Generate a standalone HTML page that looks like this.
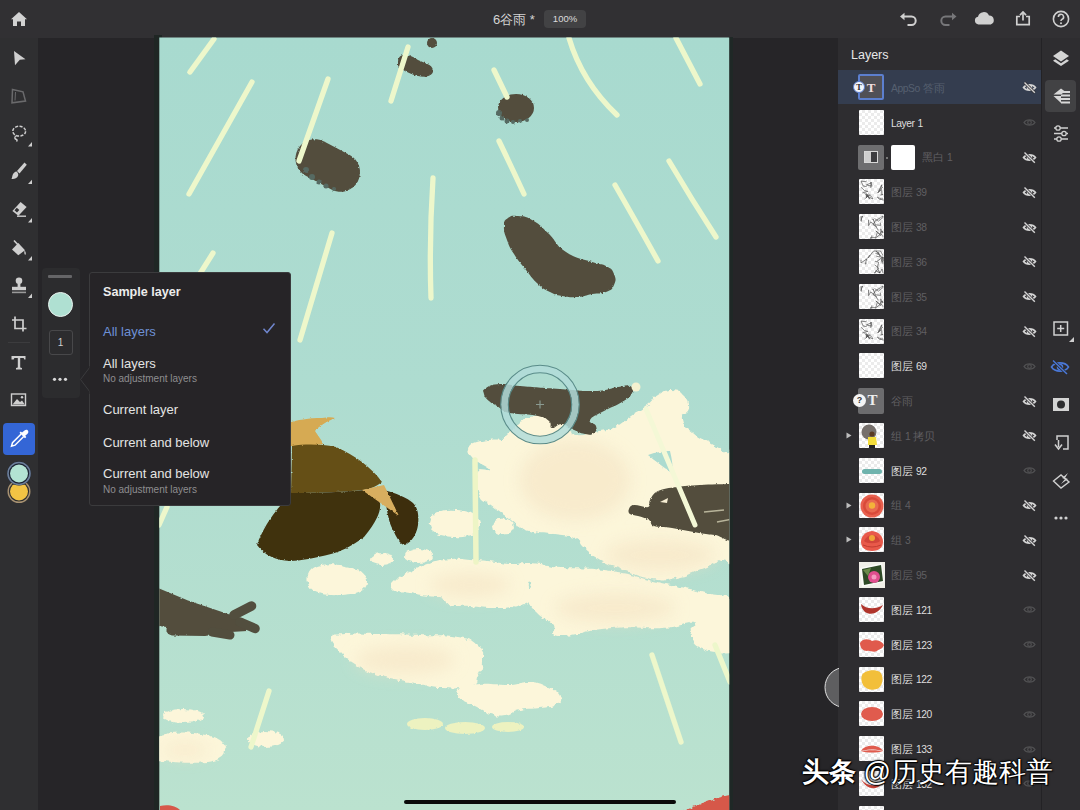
<!DOCTYPE html>
<html><head><meta charset="utf-8">
<style>
*{box-sizing:border-box}
html,body{margin:0;padding:0}
body{width:1080px;height:810px;overflow:hidden;position:relative;background:#262528;font-family:"Liberation Sans",sans-serif;color:#e6e6e6}
.abs{position:absolute}
#top{left:0;top:0;width:1080px;height:38px;background:#313033}
#ltool{left:0;top:38px;width:38px;height:772px;background:#2f2f31}
#canvas{left:159px;top:37px;width:571px;height:773px}
#cshadow{left:728px;top:37px;width:5px;height:773px;background:#1f2826}
#cshadowl{left:154px;top:35px;width:8px;height:775px;background:#1f2624}
#panel{left:838px;top:38px;width:203px;height:772px;background:#2e2d30}
#rstrip{left:1042px;top:38px;width:38px;height:772px;background:#2e2d30}
#rsep{left:1041px;top:38px;width:1px;height:772px;background:#232225}
</style></head>
<body>
<!-- TOP BAR -->
<div id="top" class="abs">
  <svg class="abs" style="left:10px;top:11px" width="18" height="16" viewBox="0 0 18 16">
    <path d="M9 1 L17 8.2 L15 8.2 L15 15 L11 15 L11 10.5 L7 10.5 L7 15 L3 15 L3 8.2 L1 8.2 Z" fill="#d2d2d2"/>
  </svg>
  <div class="abs" style="left:493px;top:11px;font-size:13px;color:#d4d4d4;letter-spacing:0px;white-space:nowrap">6谷雨 *</div>
  <div class="abs" style="left:544px;top:10px;width:42px;height:18px;background:#424244;border-radius:4px;font-size:9.5px;color:#dcdcdc;text-align:center;line-height:18px">100%</div>
  <svg class="abs" style="left:898px;top:11px" width="22" height="16" viewBox="0 0 22 16">
    <path d="M5 5.5 H13.5 A4.2 4.2 0 0 1 13.5 13.9 H9.5" fill="none" stroke="#d0d0d0" stroke-width="2"/>
    <path d="M2 5.5 L6.5 1.8 L6.5 9.2 Z" fill="#d0d0d0"/>
  </svg>
  <svg class="abs" style="left:937px;top:11px" width="22" height="16" viewBox="0 0 22 16">
    <path d="M16.5 5.5 H8.5 A4.2 4.2 0 0 0 8.5 13.9 H12.5" fill="none" stroke="#77777a" stroke-width="2"/>
    <path d="M19.5 5.5 L15 1.8 L15 9.2 Z" fill="#77777a"/>
  </svg>
  <svg class="abs" style="left:973px;top:11px" width="24" height="15" viewBox="0 0 24 15">
    <path d="M5.5 13.5 A3.9 3.9 0 0 1 5 5.8 A5.8 5.8 0 0 1 16 4.6 A4.6 4.6 0 0 1 17.8 13.5 Z" fill="#d0d0d0"/>
  </svg>
  <svg class="abs" style="left:1015px;top:11px" width="16" height="15" viewBox="0 0 16 15">
    <path d="M5 5.5 H1.8 V13.6 H14.2 V5.5 H11" fill="none" stroke="#d0d0d0" stroke-width="1.7"/>
    <path d="M8 9.5 V1.5" stroke="#d0d0d0" stroke-width="1.7"/>
    <path d="M5 4.2 L8 1 L11 4.2" fill="none" stroke="#d0d0d0" stroke-width="1.7"/>
  </svg>
  <svg class="abs" style="left:1052px;top:10px" width="18" height="18" viewBox="0 0 18 18">
    <circle cx="9" cy="9" r="7.6" fill="none" stroke="#d0d0d0" stroke-width="1.6"/>
    <path d="M6.4 7 A2.6 2.6 0 1 1 9.8 9.4 C9.1 9.8 9 10.3 9 11" fill="none" stroke="#d0d0d0" stroke-width="1.6"/>
    <circle cx="9" cy="13.2" r="1" fill="#d0d0d0"/>
  </svg>
</div>

<!-- LEFT TOOLBAR -->
<div id="ltool" class="abs">
  <svg class="abs" style="left:0;top:0" width="38" height="480" viewBox="0 38 38 480">
    <g fill="#cfcfcf">
      <!-- move -->
      <path d="M14 51 L25.5 59.2 L19.8 59.8 L15 65.2 Z"/>
      <!-- lasso -->
      <path d="M28 146.5 L32 142 L32 146.5 Z"/>
      <!-- brush -->
      <path d="M24.5 162.5 L26.8 164.8 L19.5 173.5 L17 171 Z"/>
      <path d="M16.5 171.5 C18.5 173 19 175.5 17.2 177.3 C15.5 179 13 179 11.5 179 C12.3 177.3 12.2 175.3 13.2 173.8 C14.2 172.4 15.5 171.2 16.5 171.5 Z"/>
      <path d="M28 184 L32 179.8 L32 184 Z"/>
      <!-- eraser -->
      <path d="M12.4 211 L20.6 201.9 L26.6 207.1 L18.4 215.8 Z"/>
      <path d="M14.5 210.3 L16.8 207.8 L19.3 210 L17 212.6 Z" fill="#2f2f31"/>
      <path d="M17 216.2 H26" stroke="#cfcfcf" stroke-width="1.4"/>
      <path d="M28 222.5 L32 218 L32 222.5 Z"/>
      <!-- bucket -->
      <path d="M12 249.5 L18.3 243 L25 250.2 L18.3 255.2 Z"/>
      <path d="M14 240.5 L20.5 247.5" stroke="#cfcfcf" stroke-width="1.6"/>
      <path d="M24.6 250.6 C26 252.5 26.3 254 25.2 255 C24.2 254.2 24 252.5 24.6 250.6 Z"/>
      <path d="M28 260.5 L32 256 L32 260.5 Z"/>
      <!-- stamp -->
      <circle cx="19" cy="280.8" r="3.3"/>
      <path d="M17.6 283 H20.4 V287 H17.6 Z"/>
      <path d="M12 286.8 H26 V290.2 H12 Z"/>
      <path d="M12 291.6 H26 V293.2 H12 Z" fill="#9a9a9a"/>
      <path d="M28 298 L32 293.5 L32 298 Z"/>
    </g>
    <!-- transform (dim) -->
    <path d="M12.5 89.5 L23 91.8 L25.5 101 L12 102.8 Z" fill="none" stroke="#6a6a6c" stroke-width="1.5"/>
    <path d="M15.5 92 L15 100.5" stroke="#6a6a6c" stroke-width="1"/>
    <!-- lasso dashed -->
    <ellipse cx="19.2" cy="131.2" rx="6.4" ry="4.9" fill="none" stroke="#cfcfcf" stroke-width="1.5" stroke-dasharray="3 1.4"/>
    <path d="M16.5 135.5 C14 137 14.5 139 16.5 139.5 C17.5 140 17 141 16.5 141.5" fill="none" stroke="#cfcfcf" stroke-width="1.4"/>
    <!-- crop -->
    <path d="M15 316.5 V328.5 H26.5 M12 320 H23 V331.5" fill="none" stroke="#cfcfcf" stroke-width="1.7"/>
    <!-- separator -->
    <rect x="8" y="342" width="22" height="1" fill="#3c3c3e"/>
    <!-- T -->
    <path d="M11.5 356 H25.5 V359.5 H24.3 L23.6 358 H20.2 V367.5 L22 368 V369.5 H16 V368 L17.8 367.5 V358 H14.4 L13.7 359.5 H11.5 Z" fill="#cfcfcf"/>
    <!-- image -->
    <rect x="11.5" y="394" width="14" height="11.5" fill="none" stroke="#cfcfcf" stroke-width="1.4"/>
    <path d="M12.5 404.5 L17 399 L20 402 L22 400.5 L24.8 404.5 Z" fill="#cfcfcf"/>
    <circle cx="22" cy="397.2" r="1.2" fill="#cfcfcf"/>
  </svg>
  <!-- eyedropper active -->
  <div class="abs" style="left:3px;top:385px;width:32px;height:32px;background:#3466d6;border-radius:4px"></div>
  <svg class="abs" style="left:3px;top:385px" width="32" height="32" viewBox="0 0 32 32">
    <path d="M21.5 7.5 C23 6 25 6.5 25.3 8.5 C25.5 9.8 24.8 10.6 24 11.2 L22.2 12.8 L23.3 14 L22 15.3 L16.5 9.8 L17.8 8.5 L19 9.6 Z" fill="#ffffff"/>
    <path d="M18.2 11 L9.5 19.7 L8.5 23.2 L12 22.2 L20.7 13.5" fill="none" stroke="#ffffff" stroke-width="1.5"/>
  </svg>
  <!-- colors -->
  <svg class="abs" style="left:0;top:423px" width="37" height="82" viewBox="0 461 37 82">
    <circle cx="19" cy="491.5" r="10.8" fill="#2d2d2f" stroke="#a89272" stroke-width="1.4"/>
    <circle cx="19" cy="491.5" r="9" fill="#f3c444"/>
    <circle cx="19" cy="473.5" r="12" fill="#1c2433"/>
    <circle cx="19" cy="473.5" r="11" fill="none" stroke="#6d7f9a" stroke-width="1.6"/>
    <circle cx="19" cy="473.5" r="9" fill="#b3e3d3"/>
  </svg>
</div>


<div id="cshadow" class="abs"></div><div id="cshadowl" class="abs"></div>
<svg id="canvas" class="abs" width="571" height="773" viewBox="159 37 571 773">
  <defs>
    <linearGradient id="sky" x1="0" y1="0" x2="0" y2="1">
      <stop offset="0" stop-color="#a8dacf"/>
      <stop offset="0.45" stop-color="#aedcd0"/>
      <stop offset="1" stop-color="#bbe2cf"/>
    </linearGradient>
    <filter id="blur6" x="-50%" y="-50%" width="200%" height="200%"><feGaussianBlur stdDeviation="8"/></filter>
    <filter id="rough" x="-10%" y="-10%" width="120%" height="120%">
      <feTurbulence type="fractalNoise" baseFrequency="0.2" numOctaves="2" seed="3" result="n"/>
      <feDisplacementMap in="SourceGraphic" in2="n" scale="5" xChannelSelector="R" yChannelSelector="G"/>
    </filter>
    <filter id="rough2" x="-10%" y="-10%" width="120%" height="120%">
      <feTurbulence type="fractalNoise" baseFrequency="0.5" numOctaves="1" seed="7" result="n"/>
      <feDisplacementMap in="SourceGraphic" in2="n" scale="2.5" xChannelSelector="R" yChannelSelector="G"/>
    </filter>
    <clipPath id="cc"><rect x="159.3" y="37.5" width="569.9" height="772.5"/></clipPath>
  </defs>
  <g clip-path="url(#cc)">
  <rect x="159" y="37" width="571" height="773" fill="url(#sky)"/>

  <g filter="url(#rough)">
  <g fill="#fcf6da">
    <path d="M468.0 449.0 C469.1 445.5 468.1 445.4 474.0 443.0 C479.9 440.6 482.5 441.1 490.0 440.0 C497.5 438.9 497.2 440.6 502.0 439.0 C506.8 437.4 503.7 437.7 508.0 434.0 C512.3 430.3 512.1 429.5 518.0 425.0 C523.9 420.5 519.9 419.1 530.0 417.0 C540.1 414.9 545.9 414.1 556.0 417.0 C566.1 419.9 562.4 423.2 568.0 428.0 C573.6 432.8 568.5 434.2 577.0 435.0 C585.5 435.8 589.9 433.1 600.0 431.0 C610.1 428.9 606.7 431.0 615.0 427.0 C623.3 423.0 622.2 421.9 631.0 416.0 C639.8 410.1 640.8 410.6 648.0 405.0 C655.2 399.4 651.6 399.0 658.0 395.0 C664.4 391.0 665.1 389.7 672.0 390.0 C678.9 390.3 679.5 391.2 684.0 396.0 C688.5 400.8 689.5 401.9 689.0 408.0 C688.5 414.1 680.9 412.3 682.0 419.0 C683.1 425.7 685.0 426.3 693.0 433.0 C701.0 439.7 703.2 438.9 712.0 444.0 C720.8 449.1 720.1 448.8 726.0 452.0 C731.9 455.2 731.9 429.3 734.0 456.0 C736.1 482.7 737.2 524.3 734.0 552.0 C730.8 579.7 730.8 555.5 722.0 560.0 C713.2 564.5 713.3 564.2 701.0 569.0 C688.7 573.8 689.1 575.3 676.0 578.0 C662.9 580.7 666.7 581.4 652.0 579.0 C637.3 576.6 635.7 574.6 621.0 569.0 C606.3 563.4 607.4 564.1 597.0 558.0 C586.6 551.9 587.1 551.1 582.0 546.0 C576.9 540.9 583.3 541.9 578.0 539.0 C572.7 536.1 574.0 536.9 562.0 535.0 C550.0 533.1 544.7 534.7 533.0 532.0 C521.3 529.3 524.9 529.0 518.0 525.0 C511.1 521.0 514.2 522.1 507.0 517.0 C499.8 511.9 498.5 512.1 491.0 506.0 C483.5 499.9 482.5 503.3 479.0 494.0 C475.5 484.7 475.1 477.4 478.0 471.0 C480.9 464.6 490.0 472.4 490.0 470.0 C490.0 467.6 483.3 465.7 478.0 462.0 C472.7 458.3 472.7 459.5 470.0 456.0 C467.3 452.5 466.9 452.5 468.0 449.0 Z"/>
    <path d="M391.0 588.0 C390.5 584.8 392.5 583.5 396.0 580.0 C399.5 576.5 397.6 578.5 404.0 575.0 C410.4 571.5 411.5 570.5 420.0 567.0 C428.5 563.5 427.5 564.1 436.0 562.0 C444.5 559.9 442.9 559.5 452.0 559.0 C461.1 558.5 460.4 559.5 470.0 560.0 C479.6 560.5 477.3 559.9 488.0 561.0 C498.7 562.1 498.8 563.5 510.0 564.0 C521.2 564.5 519.9 562.5 530.0 563.0 C540.1 563.5 541.1 564.4 548.0 566.0 C554.9 567.6 556.0 566.9 556.0 569.0 C556.0 571.1 552.3 571.1 548.0 574.0 C543.7 576.9 545.3 577.3 540.0 580.0 C534.7 582.7 529.9 579.5 528.0 584.0 C526.1 588.5 535.1 591.1 533.0 597.0 C530.9 602.9 526.1 603.3 520.0 606.0 C513.9 608.7 517.5 607.5 510.0 607.0 C502.5 606.5 502.7 605.6 492.0 604.0 C481.3 602.4 481.7 602.6 470.0 601.0 C458.3 599.4 459.2 599.3 448.0 598.0 C436.8 596.7 438.1 597.3 428.0 596.0 C417.9 594.7 418.0 594.1 410.0 593.0 C402.0 591.9 403.1 593.3 398.0 592.0 C392.9 590.7 391.5 591.2 391.0 588.0 Z"/>
    <path d="M534.0 568.0 C541.5 564.3 539.5 567.2 560.0 568.0 C580.5 568.8 585.1 567.3 611.0 571.0 C636.9 574.7 633.0 576.4 657.0 582.0 C681.0 587.6 680.5 586.1 701.0 592.0 C721.5 597.9 725.2 590.9 734.0 604.0 C742.8 617.1 739.9 631.9 734.0 641.0 C728.1 650.1 723.5 640.1 712.0 638.0 C700.5 635.9 695.8 637.0 691.0 633.0 C686.2 629.0 701.7 624.3 694.0 623.0 C686.3 621.7 684.1 626.7 662.0 628.0 C639.9 629.3 638.5 625.9 611.0 628.0 C583.5 630.1 574.5 636.8 559.0 636.0 C543.5 635.2 559.1 631.4 553.0 625.0 C546.9 618.6 542.7 619.2 536.0 612.0 C529.3 604.8 529.1 606.0 528.0 598.0 C526.9 590.0 530.4 590.0 532.0 582.0 C533.6 574.0 526.5 571.7 534.0 568.0 Z"/>
    <path d="M331.0 638.0 C332.3 633.2 331.9 635.1 345.0 634.0 C358.1 632.9 360.0 633.7 380.0 634.0 C400.0 634.3 399.2 634.2 420.0 635.0 C440.8 635.8 442.5 634.3 458.0 637.0 C473.5 639.7 471.3 638.9 478.0 645.0 C484.7 651.1 483.0 651.7 483.0 660.0 C483.0 668.3 481.5 669.1 478.0 676.0 C474.5 682.9 480.1 682.8 470.0 686.0 C459.9 689.2 453.3 688.5 440.0 688.0 C426.7 687.5 430.7 686.1 420.0 684.0 C409.3 681.9 412.0 682.7 400.0 680.0 C388.0 677.3 387.0 678.3 375.0 674.0 C363.0 669.7 364.3 669.9 355.0 664.0 C345.7 658.1 346.4 658.9 340.0 652.0 C333.6 645.1 329.7 642.8 331.0 638.0 Z"/>
    <path d="M460.0 688.0 C464.8 683.7 466.7 684.8 480.0 684.0 C493.3 683.2 497.2 685.5 510.0 685.0 C522.8 684.5 518.4 681.7 528.0 682.0 C537.6 682.3 537.5 682.3 546.0 686.0 C554.5 689.7 557.3 690.9 560.0 696.0 C562.7 701.1 561.3 701.8 556.0 705.0 C550.7 708.2 549.6 706.7 540.0 708.0 C530.4 709.3 529.3 707.9 520.0 710.0 C510.7 712.1 513.0 714.9 505.0 716.0 C497.0 717.1 498.0 716.7 490.0 714.0 C482.0 711.3 482.5 709.7 475.0 706.0 C467.5 702.3 466.0 704.8 462.0 700.0 C458.0 695.2 455.2 692.3 460.0 688.0 Z"/>
    <path d="M445.0 580.0 C451.7 573.6 455.3 577.5 470.0 578.0 C484.7 578.5 486.7 578.8 500.0 582.0 C513.3 585.2 512.8 585.2 520.0 590.0 C527.2 594.8 528.3 595.7 527.0 600.0 C525.7 604.3 523.5 603.9 515.0 606.0 C506.5 608.1 507.0 608.0 495.0 608.0 C483.0 608.0 483.3 607.6 470.0 606.0 C456.7 604.4 451.7 608.9 445.0 602.0 C438.3 595.1 438.3 586.4 445.0 580.0 Z"/>
    <path d="M430 522 C432 511 445 509 455 510 C468 510 480 515 480 524 C480 534 468 538 455 537 C440 537 428 532 430 522 Z"/>
    <ellipse cx="503" cy="526.5" rx="11" ry="8"/>
    <ellipse cx="382" cy="559" rx="12" ry="6"/>
    <ellipse cx="419" cy="556" rx="14" ry="7"/>
    <path d="M308 575 C312 563 330 563 345 566 C358 568 368 574 367 582 C366 592 350 596 330 595 C315 594 305 588 308 575 Z"/>
    <ellipse cx="183" cy="716" rx="21" ry="7"/>
    <path d="M158 736 C175 730 205 732 220 740 C230 748 226 760 208 762 C185 764 170 762 158 760 Z"/>
    <ellipse cx="266" cy="739" rx="18" ry="8"/>
    <path d="M692 628 C700 620 720 620 734 622 L734 652 C715 654 695 650 692 640 Z"/>
  </g>
  </g>
  <!-- peach interiors -->
  <g fill="#f4e2c2" filter="url(#blur6)" opacity="0.55">
    <ellipse cx="575" cy="480" rx="55" ry="40"/>
    <ellipse cx="660" cy="555" rx="55" ry="16"/>
    <ellipse cx="615" cy="608" rx="60" ry="15"/>
    <ellipse cx="470" cy="585" rx="40" ry="12"/>
    <ellipse cx="405" cy="660" rx="50" ry="14"/>
    <ellipse cx="185" cy="750" rx="22" ry="7"/>
  </g>
  <path d="M648 455 C656 452 665 451 670 451 C672 459 673 467 673 474 C665 468 655 461 648 455 Z" fill="#acdbd0" filter="url(#rough2)"/>
  <path d="M471 460 L478 462 L490 470 L479 469 Z" fill="#acdbd0"/>
  <g fill="#edf2c0" opacity="1" filter="url(#rough2)">
    <ellipse cx="425" cy="724" rx="18" ry="6"/>
    <ellipse cx="465" cy="728" rx="20" ry="6"/>
    <ellipse cx="508" cy="727" rx="16" ry="5"/>
  </g>
  <!-- vertical line in cloud -->
  <path d="M475 460 L476 562" stroke="#eef5c6" stroke-width="5.5" stroke-linecap="round"/>

  <!-- dark blobs -->
  <g fill="#524e3e" filter="url(#rough2)">
    <rect x="294" y="146" width="68" height="39" rx="19.5" transform="rotate(28 328 165)"/>
    <path d="M398 60 C400 52 410 54 418 60 C424 63 432 64 433 70 C434 76 425 78 418 76 C410 74 402 70 398 66 Z"/>
    <circle cx="432" cy="43" r="5"/>
    <ellipse cx="516" cy="108" rx="18" ry="14"/>
    <path d="M518.0 216.0 C524.4 216.5 524.0 215.5 532.0 220.0 C540.0 224.5 538.9 224.5 548.0 233.0 C557.1 241.5 554.3 244.3 566.0 252.0 C577.7 259.7 581.3 258.3 592.0 262.0 C602.7 265.7 600.1 262.8 606.0 266.0 C611.9 269.2 611.9 268.9 614.0 274.0 C616.1 279.1 616.1 280.2 614.0 285.0 C611.9 289.8 611.9 289.6 606.0 292.0 C600.1 294.4 599.5 292.7 592.0 294.0 C584.5 295.3 586.0 296.5 578.0 297.0 C570.0 297.5 569.5 297.3 562.0 296.0 C554.5 294.7 556.4 295.2 550.0 292.0 C543.6 288.8 544.4 289.9 538.0 284.0 C531.6 278.1 532.4 278.0 526.0 270.0 C519.6 262.0 519.1 262.0 514.0 254.0 C508.9 246.0 509.7 247.5 507.0 240.0 C504.3 232.5 503.7 231.9 504.0 226.0 C504.3 220.1 504.3 220.7 508.0 218.0 C511.7 215.3 511.6 215.5 518.0 216.0 Z"/>
    <path d="M486.0 388.0 C490.3 385.3 490.9 384.5 500.0 384.0 C509.1 383.5 504.0 384.7 520.0 386.0 C536.0 387.3 540.0 387.7 560.0 389.0 C580.0 390.3 579.5 391.5 595.0 391.0 C610.5 390.5 608.7 388.3 618.0 387.0 C627.3 385.7 626.3 384.4 630.0 386.0 C633.7 387.6 634.1 388.7 632.0 393.0 C629.9 397.3 629.5 397.2 622.0 402.0 C614.5 406.8 612.5 406.2 604.0 411.0 C595.5 415.8 592.1 416.0 590.0 420.0 C587.9 424.0 594.9 422.5 596.0 426.0 C597.1 429.5 596.9 430.9 594.0 433.0 C591.1 435.1 590.9 435.1 585.0 434.0 C579.1 432.9 578.1 431.7 572.0 429.0 C565.9 426.3 567.3 424.3 562.0 424.0 C556.7 423.7 555.5 428.8 552.0 428.0 C548.5 427.2 552.7 424.2 549.0 421.0 C545.3 417.8 546.3 417.9 538.0 416.0 C529.7 414.1 526.5 415.1 518.0 414.0 C509.5 412.9 511.6 414.1 506.0 412.0 C500.4 409.9 501.5 408.9 497.0 406.0 C492.5 403.1 492.5 404.2 489.0 401.0 C485.5 397.8 484.8 397.5 484.0 394.0 C483.2 390.5 481.7 390.7 486.0 388.0 Z"/>
    <path d="M629.0 509.0 C629.8 507.2 630.2 505.4 634.0 505.0 C637.8 504.6 644.8 508.0 648.0 507.0 C651.2 506.0 648.0 503.2 650.0 500.0 C652.0 496.8 652.6 493.6 658.0 491.0 C663.4 488.4 668.6 488.2 677.0 487.0 C685.4 485.8 689.4 485.6 700.0 485.0 C710.6 484.4 723.2 484.2 730.0 484.0 C736.8 483.8 733.2 473.6 734.0 484.0 C734.8 494.4 737.8 525.8 734.0 536.0 C730.2 546.2 722.0 535.6 715.0 535.0 C708.0 534.4 707.6 534.4 699.0 533.0 C690.4 531.6 681.0 529.4 672.0 528.0 C663.0 526.6 658.6 527.6 654.0 526.0 C649.4 524.4 652.2 522.0 649.0 520.0 C645.8 518.0 641.8 517.2 638.0 516.0 C634.2 514.8 631.8 515.4 630.0 514.0 C628.2 512.6 628.2 510.8 629.0 509.0 Z"/>
    <path d="M158 588 L188 600.6 L231 615 L244 619 L247 631 L231 632 L205 636 L172 635.5 C166 634 166 630 167 627 L158 626 Z"/>
  </g>
  <g stroke="#524e3e" stroke-linecap="round" fill="none">
    <path d="M234 615 L251.5 606" stroke-width="9.5"/>
    <path d="M240 622 L255 628.5" stroke-width="9.5"/>
    <path d="M212 632 L230 635" stroke-width="9"/>
  </g>
  <g fill="#566a62" filter="url(#rough2)">
    <circle cx="499" cy="113" r="3"/><circle cx="502" cy="118" r="2.5"/><circle cx="507" cy="121" r="2.5"/><circle cx="513" cy="122" r="2"/><circle cx="520" cy="121" r="2"/><circle cx="527" cy="120" r="2"/>
    <circle cx="306" cy="170" r="3"/><circle cx="312" cy="177" r="3"/><circle cx="319" cy="182" r="2.5"/><circle cx="326" cy="186" r="2.5"/><circle cx="334" cy="189" r="2"/>
  </g>
  <g fill="#f8efd4">
    <path d="M660 502 L668 498 L667 503 Z"/>
  </g>
  <path d="M704 512 L724 510 M717 522 L732 519" stroke="#b8b49a" stroke-width="1.5"/>
  <circle cx="636" cy="387" r="4.5" fill="#f5f1d0"/>

  <!-- rain lines -->
  <g stroke="#edf7cb" stroke-width="5.3" stroke-linecap="round" fill="none">
    <path d="M214 39 L190 72"/><path d="M252 82 L189 194"/><path d="M328 79 L299 161"/><path d="M408 47 L391 101"/><path d="M433 178 Q429 240 431 298"/><path d="M213 253 L196 280"/><path d="M332 233 L300 340"/><path d="M494 70 L507 97"/><path d="M569 38 Q582 82 617 115"/><path d="M676 38 L700 84"/><path d="M499 141 Q512 168 524 194"/><path d="M615 185 Q638 225 658 261"/><path d="M669 161 Q692 200 716 237"/><path d="M269 691 L251 747"/><path d="M652 655 L681 742"/><path d="M715 645 L730 682"/><path d="M167 507 L159 525"/>
  </g>

  <path d="M646 409 L695 525" stroke="#f4f8d6" stroke-width="5" stroke-linecap="round"/>
  <!-- hat -->
  <g filter="url(#rough2)">
  <path d="M288 446 L288 423 C296 420 310 418 322 418 C328 417 332 417 335 418 C326 422 319 426 315 431 C318 436 322 440 323 444 L309 447 Z" fill="#d6aa52"/>
  <path d="M292 446 C305 444 320 444 336 447 C355 455 372 468 382 482 C375 488 365 490 362 490 C345 492 320 493 291 493 Z" fill="#655019"/>
  <path d="M257 545 C262 530 272 515 281 505 C285 498 290 494 291 493 C320 493 345 492 364 490 C372 494 378 498 380 503 C381 510 378 520 364 537 C352 546 340 552 331 554 C315 558 300 561 290 561 C276 560 265 556 257 545 Z" fill="#3f300f"/>
  <path d="M384 490 C395 493 408 498 413 503 C418 508 419 515 418 525 C417 533 412 542 405 545 C400 545 397 538 392 528 C388 520 386 505 384 490 Z" fill="#3d2d10"/>
  <path d="M362 490 L384 485 L399 516 Z" fill="#d8ae5e"/>
  </g>

  <!-- sampling ring -->
  <circle cx="540" cy="404.5" r="35.5" fill="none" stroke="#b2dcd9" stroke-width="7" opacity="0.85"/>
  <circle cx="540" cy="404.5" r="39.3" fill="none" stroke="#5a8c8a" stroke-width="1.1"/>
  <circle cx="540" cy="404.5" r="31.7" fill="none" stroke="#5a8c8a" stroke-width="1.1"/>
  <path d="M536 404.5 H544 M540 400.5 V408.5" stroke="#8a9a90" stroke-width="1.2"/>

  <path d="M681 812 C700 804 715 798 734 794 L734 812 Z" fill="#d6584a" filter="url(#rough)"/>
  <path d="M160 806 C168 804 176 806 180 810 L160 810 Z" fill="#d6584a"/>
  </g>
</svg>
<!-- FLOATING PANEL -->
<div class="abs" style="left:42px;top:268px;width:38px;height:130px;background:#2c2c2e;border-radius:4px"></div>
<div class="abs" style="left:48px;top:274.5px;width:24px;height:3.5px;background:#656567;border-radius:1px"></div>
<div class="abs" style="left:48px;top:292px;width:25px;height:25px;border-radius:50%;background:#afe0d2;border:1px solid #e8f2ee"></div>
<div class="abs" style="left:48.5px;top:330px;width:24px;height:25px;border:1px solid #48484a;border-radius:3px;font-size:10px;color:#d0d0d0;text-align:center;line-height:23px">1</div>
<svg class="abs" style="left:50px;top:375px" width="20" height="8" viewBox="0 0 20 8">
  <circle cx="4.5" cy="4.3" r="1.6" fill="#d8d8d8"/><circle cx="10" cy="4.3" r="1.6" fill="#d8d8d8"/><circle cx="15.5" cy="4.3" r="1.6" fill="#d8d8d8"/>
</svg>

<!-- MENU -->
<div class="abs" style="left:89px;top:272px;width:202px;height:234px;background:#262427;border:1px solid #3b3b3d;border-radius:3px"></div>
<svg class="abs" style="left:79px;top:366px" width="12" height="28" viewBox="0 0 12 28">
  <path d="M11 1 L1.5 13.5 L11 26" fill="#262427" stroke="#3b3b3d" stroke-width="1"/>
  <rect x="10.5" y="0" width="2" height="28" fill="#262427"/>
</svg>
<div class="abs" style="left:103px;top:285px;font-size:12.6px;font-weight:bold;color:#ececec;white-space:nowrap">Sample layer</div>
<div class="abs" style="left:103px;top:324px;font-size:13px;color:#6e91d6;white-space:nowrap">All layers</div>
<svg class="abs" style="left:262px;top:322px" width="14" height="13" viewBox="0 0 14 13">
  <path d="M1.5 6.8 L5 10.5 L12.5 1.5" fill="none" stroke="#6f85cc" stroke-width="1.5"/>
</svg>
<div class="abs" style="left:103px;top:355.5px;font-size:13px;color:#e4e4e4;white-space:nowrap">All layers</div>
<div class="abs" style="left:103px;top:372.5px;font-size:10px;color:#8e8e90;white-space:nowrap">No adjustment layers</div>
<div class="abs" style="left:103px;top:401.5px;font-size:13px;color:#e4e4e4;white-space:nowrap">Current layer</div>
<div class="abs" style="left:103px;top:434.5px;font-size:13px;color:#e4e4e4;white-space:nowrap">Current and below</div>
<div class="abs" style="left:103px;top:466px;font-size:13px;color:#e4e4e4;white-space:nowrap">Current and below</div>
<div class="abs" style="left:103px;top:484px;font-size:10px;color:#8e8e90;white-space:nowrap">No adjustment layers</div>

<div id="panel" class="abs"></div>
<div class="abs" style="left:851px;top:48px;font-size:12.5px;color:#e8e8e8;white-space:nowrap;font-weight:normal">Layers</div>
<div class="abs" style="left:838px;top:70px;width:203px;height:34px;background:#343d4f"></div>
<div class="abs" style="left:858px;top:74.4px;width:26px;height:26px;background:#505056;border:2px solid #5c7fcf;border-radius:2px"></div>
<div class="abs" style="left:858px;top:79.9px;width:26px;text-align:center;font-family:'Liberation Serif',serif;font-weight:bold;font-size:13px;line-height:15px;color:#f1dede">T</div>
<div class="abs" style="left:853px;top:81.4px;width:12px;height:12px;border-radius:50%;background:#f4f6fb;border:1px solid #5c7fcf;font-family:'Liberation Serif',serif;font-weight:bold;font-size:9px;color:#333;text-align:center;line-height:10px">T</div>
<div class="abs" style="left:891px;top:81.7px;font-size:10.7px;line-height:13px;color:#566070;white-space:nowrap"><span style="font-size:10.3px;letter-spacing:-0.45px">AppSo</span> 答雨</div>
<svg class="abs" style="left:1021px;top:81.4px" width="17" height="13" viewBox="0 0 17 13"><path d="M2.5 6.5 C5 3 12 3 14.5 6.5 C12 10 5 10 2.5 6.5 Z" fill="none" stroke="#d4d4d4" stroke-width="1.6"/><circle cx="8.5" cy="6.5" r="2" fill="none" stroke="#d4d4d4" stroke-width="1.5"/><path d="M3.5 1.5 L13.8 11.8" stroke="#2e2d30" stroke-width="2.8"/><path d="M3.5 1.5 L13.8 11.8" stroke="#d4d4d4" stroke-width="1.4"/></svg>
<div class="abs" style="left:858.5px;top:109.7px;width:25.5px;height:25px;background-color:#ffffff;background-image:linear-gradient(45deg,#ebebeb 25%,transparent 25%,transparent 75%,#ebebeb 75%),linear-gradient(45deg,#ebebeb 25%,transparent 25%,transparent 75%,#ebebeb 75%);background-size:6px 6px;background-position:0 0,3px 3px;border-radius:1px"></div>
<div class="abs" style="left:891px;top:116.5px;font-size:10.7px;line-height:13px;color:#dedede;white-space:nowrap"><span style="font-size:10.3px;letter-spacing:-0.45px">Layer</span> <span style="font-size:10.3px;letter-spacing:-0.45px">1</span></div>
<svg class="abs" style="left:1021px;top:116.2px" width="17" height="13" viewBox="0 0 17 13"><path d="M3 6.5 C5 3 12 3 14 6.5 C12 10 5 10 3 6.5 Z" fill="none" stroke="#505052" stroke-width="1.3"/><circle cx="8.5" cy="6.5" r="1.8" fill="none" stroke="#505052" stroke-width="1.2"/></svg>
<div class="abs" style="left:858px;top:144.5px;width:26px;height:25px;background:#6e6e70;border-radius:2px"></div>
<div class="abs" style="left:864px;top:151.0px;width:14px;height:12px;background:#3d3d40;border:1px solid #d8d8d8"></div>
<div class="abs" style="left:865px;top:152.0px;width:6px;height:10px;background:#cfcfcf"></div>
<div class="abs" style="left:886px;top:156.5px;width:2px;height:2px;background:#777"></div>
<div class="abs" style="left:891px;top:144.5px;width:24px;height:25px;background:#ffffff;border-radius:2px"></div>
<div class="abs" style="left:922px;top:151.3px;font-size:10.7px;line-height:13px;color:#605f62;white-space:nowrap">黑白 <span style="font-size:10.3px;letter-spacing:-0.45px">1</span></div>
<svg class="abs" style="left:1021px;top:151.0px" width="17" height="13" viewBox="0 0 17 13"><path d="M2.5 6.5 C5 3 12 3 14.5 6.5 C12 10 5 10 2.5 6.5 Z" fill="none" stroke="#d4d4d4" stroke-width="1.6"/><circle cx="8.5" cy="6.5" r="2" fill="none" stroke="#d4d4d4" stroke-width="1.5"/><path d="M3.5 1.5 L13.8 11.8" stroke="#2e2d30" stroke-width="2.8"/><path d="M3.5 1.5 L13.8 11.8" stroke="#d4d4d4" stroke-width="1.4"/></svg>
<div class="abs" style="left:858.5px;top:179.3px;width:25.5px;height:25px;background-color:#ffffff;background-image:linear-gradient(45deg,#ebebeb 25%,transparent 25%,transparent 75%,#ebebeb 75%),linear-gradient(45deg,#ebebeb 25%,transparent 25%,transparent 75%,#ebebeb 75%);background-size:6px 6px;background-position:0 0,3px 3px;border-radius:1px"></div>
<svg class="abs" style="left:858.5px;top:179.3px" width="26" height="26" viewBox="0 0 26 26"><path d="M5.7 19.9 L8.9 17.0 L8.8 16.4 L10.6 19.9 L5.7 14.2 M19.7 11.7 L22.9 5.7 L22.2 8.3 L19.0 13.7 L23.8 8.0 M3.5 13.8 L8.8 12.4 L5.4 11.5 L2.0 8.1 L2.0 8.1 M7.7 7.6 L4.3 7.1 L2.0 2.0 L6.1 2.7 L7.8 2.0 M22.9 20.2 L18.3 18.2 L21.0 20.7 L24.0 19.8 L24.0 21.8 M9.1 14.8 L13.7 18.9 L13.7 20.0 L8.1 16.9 L11.7 15.9 M6.5 14.0 L8.9 16.1 L7.4 15.3 L7.5 18.7 L7.7 17.4 M12.8 3.6 L7.3 6.0 L13.1 7.2 L11.8 3.2 L11.9 9.0 M18.4 13.8 L22.7 10.6 L22.9 16.0 L23.8 15.5 L21.1 16.1" stroke="#3a3a3a" stroke-width="0.6" fill="none"/></svg>
<div class="abs" style="left:891px;top:186.1px;font-size:10.7px;line-height:13px;color:#605f62;white-space:nowrap">图层 <span style="font-size:10.3px;letter-spacing:-0.45px">39</span></div>
<svg class="abs" style="left:1021px;top:185.8px" width="17" height="13" viewBox="0 0 17 13"><path d="M2.5 6.5 C5 3 12 3 14.5 6.5 C12 10 5 10 2.5 6.5 Z" fill="none" stroke="#d4d4d4" stroke-width="1.6"/><circle cx="8.5" cy="6.5" r="2" fill="none" stroke="#d4d4d4" stroke-width="1.5"/><path d="M3.5 1.5 L13.8 11.8" stroke="#2e2d30" stroke-width="2.8"/><path d="M3.5 1.5 L13.8 11.8" stroke="#d4d4d4" stroke-width="1.4"/></svg>
<div class="abs" style="left:858.5px;top:214.1px;width:25.5px;height:25px;background-color:#ffffff;background-image:linear-gradient(45deg,#ebebeb 25%,transparent 25%,transparent 75%,#ebebeb 75%),linear-gradient(45deg,#ebebeb 25%,transparent 25%,transparent 75%,#ebebeb 75%);background-size:6px 6px;background-position:0 0,3px 3px;border-radius:1px"></div>
<svg class="abs" style="left:858.5px;top:214.1px" width="26" height="26" viewBox="0 0 26 26"><path d="M22.1 22.0 L16.8 17.0 L20.8 19.8 L22.9 17.5 L24.0 18.8 M14.6 6.2 L13.8 4.9 L16.5 10.8 L21.9 11.4 L21.2 8.6 M3.7 3.5 L3.3 2.0 L2.0 6.7 L2.3 7.4 L2.0 2.0 M9.5 5.7 L9.6 11.7 L11.7 7.9 L16.4 11.5 L19.3 16.3 M18.3 18.8 L16.5 24.0 L22.0 19.9 L24.0 22.5 L23.5 22.9 M12.8 21.5 L12.8 24.0 L11.1 24.0 L15.9 23.5 L16.7 24.0 M17.5 12.7 L14.1 10.6 L16.5 6.6 L21.4 3.8 L24.0 2.0 M22.1 17.1 L22.2 17.3 L24.0 18.4 L21.7 14.9 L21.9 20.1 M15.5 4.5 L19.3 7.2 L24.0 3.5 L24.0 2.0 L24.0 2.0" stroke="#3a3a3a" stroke-width="0.6" fill="none"/></svg>
<div class="abs" style="left:891px;top:220.9px;font-size:10.7px;line-height:13px;color:#605f62;white-space:nowrap">图层 <span style="font-size:10.3px;letter-spacing:-0.45px">38</span></div>
<svg class="abs" style="left:1021px;top:220.6px" width="17" height="13" viewBox="0 0 17 13"><path d="M2.5 6.5 C5 3 12 3 14.5 6.5 C12 10 5 10 2.5 6.5 Z" fill="none" stroke="#d4d4d4" stroke-width="1.6"/><circle cx="8.5" cy="6.5" r="2" fill="none" stroke="#d4d4d4" stroke-width="1.5"/><path d="M3.5 1.5 L13.8 11.8" stroke="#2e2d30" stroke-width="2.8"/><path d="M3.5 1.5 L13.8 11.8" stroke="#d4d4d4" stroke-width="1.4"/></svg>
<div class="abs" style="left:858.5px;top:248.9px;width:25.5px;height:25px;background-color:#ffffff;background-image:linear-gradient(45deg,#ebebeb 25%,transparent 25%,transparent 75%,#ebebeb 75%),linear-gradient(45deg,#ebebeb 25%,transparent 25%,transparent 75%,#ebebeb 75%);background-size:6px 6px;background-position:0 0,3px 3px;border-radius:1px"></div>
<svg class="abs" style="left:858.5px;top:248.9px" width="26" height="26" viewBox="0 0 26 26"><path d="M7.8 13.9 L6.2 15.1 L7.7 9.9 L2.0 14.0 L2.0 10.8 M22.9 12.4 L24.0 12.1 L24.0 7.9 L24.0 12.3 L24.0 15.2 M16.4 4.3 L19.5 5.4 L17.1 2.0 L21.5 2.0 L24.0 6.5 M17.3 21.4 L16.0 24.0 L15.4 24.0 L19.9 19.2 L15.5 15.8 M22.3 11.7 L23.8 9.3 L23.9 8.0 L22.1 9.0 L23.1 13.8 M16.6 21.6 L20.9 24.0 L23.0 20.0 L24.0 24.0 L24.0 24.0 M17.3 7.2 L21.3 8.1 L18.7 2.9 L22.9 8.7 L18.0 12.4 M11.2 6.0 L8.7 9.2 L13.2 3.8 L14.6 2.0 L17.2 2.0 M20.6 22.6 L20.7 24.0 L18.4 18.9 L19.6 13.3 L16.0 12.2" stroke="#3a3a3a" stroke-width="0.6" fill="none"/></svg>
<div class="abs" style="left:891px;top:255.7px;font-size:10.7px;line-height:13px;color:#605f62;white-space:nowrap">图层 <span style="font-size:10.3px;letter-spacing:-0.45px">36</span></div>
<svg class="abs" style="left:1021px;top:255.4px" width="17" height="13" viewBox="0 0 17 13"><path d="M2.5 6.5 C5 3 12 3 14.5 6.5 C12 10 5 10 2.5 6.5 Z" fill="none" stroke="#d4d4d4" stroke-width="1.6"/><circle cx="8.5" cy="6.5" r="2" fill="none" stroke="#d4d4d4" stroke-width="1.5"/><path d="M3.5 1.5 L13.8 11.8" stroke="#2e2d30" stroke-width="2.8"/><path d="M3.5 1.5 L13.8 11.8" stroke="#d4d4d4" stroke-width="1.4"/></svg>
<div class="abs" style="left:858.5px;top:283.7px;width:25.5px;height:25px;background-color:#ffffff;background-image:linear-gradient(45deg,#ebebeb 25%,transparent 25%,transparent 75%,#ebebeb 75%),linear-gradient(45deg,#ebebeb 25%,transparent 25%,transparent 75%,#ebebeb 75%);background-size:6px 6px;background-position:0 0,3px 3px;border-radius:1px"></div>
<svg class="abs" style="left:858.5px;top:283.7px" width="26" height="26" viewBox="0 0 26 26"><path d="M22.1 22.0 L16.8 17.0 L20.8 19.8 L22.9 17.5 L24.0 18.8 M14.6 6.2 L13.8 4.9 L16.5 10.8 L21.9 11.4 L21.2 8.6 M3.7 3.5 L3.3 2.0 L2.0 6.7 L2.3 7.4 L2.0 2.0 M9.5 5.7 L9.6 11.7 L11.7 7.9 L16.4 11.5 L19.3 16.3 M18.3 18.8 L16.5 24.0 L22.0 19.9 L24.0 22.5 L23.5 22.9 M12.8 21.5 L12.8 24.0 L11.1 24.0 L15.9 23.5 L16.7 24.0 M17.5 12.7 L14.1 10.6 L16.5 6.6 L21.4 3.8 L24.0 2.0 M22.1 17.1 L22.2 17.3 L24.0 18.4 L21.7 14.9 L21.9 20.1 M15.5 4.5 L19.3 7.2 L24.0 3.5 L24.0 2.0 L24.0 2.0" stroke="#3a3a3a" stroke-width="0.6" fill="none"/></svg>
<div class="abs" style="left:891px;top:290.5px;font-size:10.7px;line-height:13px;color:#605f62;white-space:nowrap">图层 <span style="font-size:10.3px;letter-spacing:-0.45px">35</span></div>
<svg class="abs" style="left:1021px;top:290.2px" width="17" height="13" viewBox="0 0 17 13"><path d="M2.5 6.5 C5 3 12 3 14.5 6.5 C12 10 5 10 2.5 6.5 Z" fill="none" stroke="#d4d4d4" stroke-width="1.6"/><circle cx="8.5" cy="6.5" r="2" fill="none" stroke="#d4d4d4" stroke-width="1.5"/><path d="M3.5 1.5 L13.8 11.8" stroke="#2e2d30" stroke-width="2.8"/><path d="M3.5 1.5 L13.8 11.8" stroke="#d4d4d4" stroke-width="1.4"/></svg>
<div class="abs" style="left:858.5px;top:318.5px;width:25.5px;height:25px;background-color:#ffffff;background-image:linear-gradient(45deg,#ebebeb 25%,transparent 25%,transparent 75%,#ebebeb 75%),linear-gradient(45deg,#ebebeb 25%,transparent 25%,transparent 75%,#ebebeb 75%);background-size:6px 6px;background-position:0 0,3px 3px;border-radius:1px"></div>
<svg class="abs" style="left:858.5px;top:318.5px" width="26" height="26" viewBox="0 0 26 26"><path d="M5.7 19.9 L8.9 17.0 L8.8 16.4 L10.6 19.9 L5.7 14.2 M19.7 11.7 L22.9 5.7 L22.2 8.3 L19.0 13.7 L23.8 8.0 M3.5 13.8 L8.8 12.4 L5.4 11.5 L2.0 8.1 L2.0 8.1 M7.7 7.6 L4.3 7.1 L2.0 2.0 L6.1 2.7 L7.8 2.0 M22.9 20.2 L18.3 18.2 L21.0 20.7 L24.0 19.8 L24.0 21.8 M9.1 14.8 L13.7 18.9 L13.7 20.0 L8.1 16.9 L11.7 15.9 M6.5 14.0 L8.9 16.1 L7.4 15.3 L7.5 18.7 L7.7 17.4 M12.8 3.6 L7.3 6.0 L13.1 7.2 L11.8 3.2 L11.9 9.0 M18.4 13.8 L22.7 10.6 L22.9 16.0 L23.8 15.5 L21.1 16.1" stroke="#3a3a3a" stroke-width="0.6" fill="none"/></svg>
<div class="abs" style="left:891px;top:325.3px;font-size:10.7px;line-height:13px;color:#605f62;white-space:nowrap">图层 <span style="font-size:10.3px;letter-spacing:-0.45px">34</span></div>
<svg class="abs" style="left:1021px;top:325.0px" width="17" height="13" viewBox="0 0 17 13"><path d="M2.5 6.5 C5 3 12 3 14.5 6.5 C12 10 5 10 2.5 6.5 Z" fill="none" stroke="#d4d4d4" stroke-width="1.6"/><circle cx="8.5" cy="6.5" r="2" fill="none" stroke="#d4d4d4" stroke-width="1.5"/><path d="M3.5 1.5 L13.8 11.8" stroke="#2e2d30" stroke-width="2.8"/><path d="M3.5 1.5 L13.8 11.8" stroke="#d4d4d4" stroke-width="1.4"/></svg>
<div class="abs" style="left:858.5px;top:353.3px;width:25.5px;height:25px;background-color:#ffffff;background-image:linear-gradient(45deg,#ebebeb 25%,transparent 25%,transparent 75%,#ebebeb 75%),linear-gradient(45deg,#ebebeb 25%,transparent 25%,transparent 75%,#ebebeb 75%);background-size:6px 6px;background-position:0 0,3px 3px;border-radius:1px"></div>
<div class="abs" style="left:891px;top:360.1px;font-size:10.7px;line-height:13px;color:#dedede;white-space:nowrap">图层 <span style="font-size:10.3px;letter-spacing:-0.45px">69</span></div>
<svg class="abs" style="left:1021px;top:359.8px" width="17" height="13" viewBox="0 0 17 13"><path d="M3 6.5 C5 3 12 3 14 6.5 C12 10 5 10 3 6.5 Z" fill="none" stroke="#505052" stroke-width="1.3"/><circle cx="8.5" cy="6.5" r="1.8" fill="none" stroke="#505052" stroke-width="1.2"/></svg>
<div class="abs" style="left:858px;top:387.6px;width:26px;height:26px;background:#6c6c6e;border-radius:2px"></div>
<div class="abs" style="left:858px;top:392.1px;width:29px;text-align:center;font-family:'Liberation Serif',serif;font-weight:bold;font-size:15px;line-height:17px;color:#eeeeee">T</div>
<div class="abs" style="left:853px;top:394.1px;width:13px;height:13px;border-radius:50%;background:#f4f4f4;font-weight:bold;font-size:9px;color:#333;text-align:center;line-height:13px">?</div>
<div class="abs" style="left:891px;top:394.9px;font-size:10.7px;line-height:13px;color:#605f62;white-space:nowrap">谷雨</div>
<svg class="abs" style="left:1021px;top:394.6px" width="17" height="13" viewBox="0 0 17 13"><path d="M2.5 6.5 C5 3 12 3 14.5 6.5 C12 10 5 10 2.5 6.5 Z" fill="none" stroke="#d4d4d4" stroke-width="1.6"/><circle cx="8.5" cy="6.5" r="2" fill="none" stroke="#d4d4d4" stroke-width="1.5"/><path d="M3.5 1.5 L13.8 11.8" stroke="#2e2d30" stroke-width="2.8"/><path d="M3.5 1.5 L13.8 11.8" stroke="#d4d4d4" stroke-width="1.4"/></svg>
<div class="abs" style="left:858.5px;top:422.9px;width:25.5px;height:25px;background-color:#ffffff;background-image:linear-gradient(45deg,#ebebeb 25%,transparent 25%,transparent 75%,#ebebeb 75%),linear-gradient(45deg,#ebebeb 25%,transparent 25%,transparent 75%,#ebebeb 75%);background-size:6px 6px;background-position:0 0,3px 3px;border-radius:1px"></div>
<svg class="abs" style="left:858.5px;top:422.9px" width="26" height="26" viewBox="0 0 26 26"><circle cx="10" cy="9" r="7.5" fill="#76706c"/><circle cx="13" cy="11" r="2.6" fill="#5a3a22"/><path d="M9 14 H17 L18 22 H9 Z" fill="#f2dc3a"/><rect x="10" y="22" width="6" height="3" fill="#222"/></svg>
<svg class="abs" style="left:846px;top:431.9px" width="6" height="7" viewBox="0 0 6 7"><path d="M0.5 0.5 L5.5 3.5 L0.5 6.5 Z" fill="#bdbdbd"/></svg>
<div class="abs" style="left:891px;top:429.7px;font-size:10.7px;line-height:13px;color:#605f62;white-space:nowrap">组 <span style="font-size:10.3px;letter-spacing:-0.45px">1</span> 拷贝</div>
<svg class="abs" style="left:1021px;top:429.4px" width="17" height="13" viewBox="0 0 17 13"><path d="M2.5 6.5 C5 3 12 3 14.5 6.5 C12 10 5 10 2.5 6.5 Z" fill="none" stroke="#d4d4d4" stroke-width="1.6"/><circle cx="8.5" cy="6.5" r="2" fill="none" stroke="#d4d4d4" stroke-width="1.5"/><path d="M3.5 1.5 L13.8 11.8" stroke="#2e2d30" stroke-width="2.8"/><path d="M3.5 1.5 L13.8 11.8" stroke="#d4d4d4" stroke-width="1.4"/></svg>
<div class="abs" style="left:858.5px;top:457.7px;width:25.5px;height:25px;background-color:#ffffff;background-image:linear-gradient(45deg,#ebebeb 25%,transparent 25%,transparent 75%,#ebebeb 75%),linear-gradient(45deg,#ebebeb 25%,transparent 25%,transparent 75%,#ebebeb 75%);background-size:6px 6px;background-position:0 0,3px 3px;border-radius:1px"></div>
<svg class="abs" style="left:858.5px;top:457.7px" width="26" height="26" viewBox="0 0 26 26"><rect x="3" y="11" width="20" height="5" rx="2.5" fill="#6fb3ad"/></svg>
<div class="abs" style="left:891px;top:464.5px;font-size:10.7px;line-height:13px;color:#dedede;white-space:nowrap">图层 <span style="font-size:10.3px;letter-spacing:-0.45px">92</span></div>
<svg class="abs" style="left:1021px;top:464.2px" width="17" height="13" viewBox="0 0 17 13"><path d="M3 6.5 C5 3 12 3 14 6.5 C12 10 5 10 3 6.5 Z" fill="none" stroke="#505052" stroke-width="1.3"/><circle cx="8.5" cy="6.5" r="1.8" fill="none" stroke="#505052" stroke-width="1.2"/></svg>
<div class="abs" style="left:858.5px;top:492.5px;width:25.5px;height:25px;background-color:#ffffff;background-image:linear-gradient(45deg,#ebebeb 25%,transparent 25%,transparent 75%,#ebebeb 75%),linear-gradient(45deg,#ebebeb 25%,transparent 25%,transparent 75%,#ebebeb 75%);background-size:6px 6px;background-position:0 0,3px 3px;border-radius:1px"></div>
<svg class="abs" style="left:858.5px;top:492.5px" width="26" height="26" viewBox="0 0 26 26"><circle cx="13" cy="13" r="11.5" fill="#e8604e"/><circle cx="13" cy="13" r="9" fill="#d94a3a"/><circle cx="13" cy="13" r="6.5" fill="#e86a50"/><circle cx="13" cy="12.5" r="3.2" fill="#f3b23a"/></svg>
<svg class="abs" style="left:846px;top:501.5px" width="6" height="7" viewBox="0 0 6 7"><path d="M0.5 0.5 L5.5 3.5 L0.5 6.5 Z" fill="#bdbdbd"/></svg>
<div class="abs" style="left:891px;top:499.3px;font-size:10.7px;line-height:13px;color:#605f62;white-space:nowrap">组 <span style="font-size:10.3px;letter-spacing:-0.45px">4</span></div>
<svg class="abs" style="left:1021px;top:499.0px" width="17" height="13" viewBox="0 0 17 13"><path d="M2.5 6.5 C5 3 12 3 14.5 6.5 C12 10 5 10 2.5 6.5 Z" fill="none" stroke="#d4d4d4" stroke-width="1.6"/><circle cx="8.5" cy="6.5" r="2" fill="none" stroke="#d4d4d4" stroke-width="1.5"/><path d="M3.5 1.5 L13.8 11.8" stroke="#2e2d30" stroke-width="2.8"/><path d="M3.5 1.5 L13.8 11.8" stroke="#d4d4d4" stroke-width="1.4"/></svg>
<div class="abs" style="left:858.5px;top:527.3px;width:25.5px;height:25px;background-color:#ffffff;background-image:linear-gradient(45deg,#ebebeb 25%,transparent 25%,transparent 75%,#ebebeb 75%),linear-gradient(45deg,#ebebeb 25%,transparent 25%,transparent 75%,#ebebeb 75%);background-size:6px 6px;background-position:0 0,3px 3px;border-radius:1px"></div>
<svg class="abs" style="left:858.5px;top:527.3px" width="26" height="26" viewBox="0 0 26 26"><path d="M2 15 C2 9 6 5 13 4 C20 5 24 9 24 15 C24 21 19 24 13 24 C7 24 2 21 2 15 Z" fill="#e8594a"/><path d="M5 14 C7 10 10 8 13 8 C17 8 20 11 21 14 C18 17 8 17 5 14 Z" fill="#d2453a"/><circle cx="13" cy="11" r="3" fill="#f0a33a"/><path d="M4 18 Q13 22 22 18" stroke="#c23c30" stroke-width="1" fill="none"/></svg>
<svg class="abs" style="left:846px;top:536.3px" width="6" height="7" viewBox="0 0 6 7"><path d="M0.5 0.5 L5.5 3.5 L0.5 6.5 Z" fill="#bdbdbd"/></svg>
<div class="abs" style="left:891px;top:534.1px;font-size:10.7px;line-height:13px;color:#605f62;white-space:nowrap">组 <span style="font-size:10.3px;letter-spacing:-0.45px">3</span></div>
<svg class="abs" style="left:1021px;top:533.8px" width="17" height="13" viewBox="0 0 17 13"><path d="M2.5 6.5 C5 3 12 3 14.5 6.5 C12 10 5 10 2.5 6.5 Z" fill="none" stroke="#d4d4d4" stroke-width="1.6"/><circle cx="8.5" cy="6.5" r="2" fill="none" stroke="#d4d4d4" stroke-width="1.5"/><path d="M3.5 1.5 L13.8 11.8" stroke="#2e2d30" stroke-width="2.8"/><path d="M3.5 1.5 L13.8 11.8" stroke="#d4d4d4" stroke-width="1.4"/></svg>
<div class="abs" style="left:858.5px;top:562.1px;width:25.5px;height:25px;background-color:#ffffff;background-image:linear-gradient(45deg,#ebebeb 25%,transparent 25%,transparent 75%,#ebebeb 75%),linear-gradient(45deg,#ebebeb 25%,transparent 25%,transparent 75%,#ebebeb 75%);background-size:6px 6px;background-position:0 0,3px 3px;border-radius:1px"></div>
<svg class="abs" style="left:858.5px;top:562.1px" width="26" height="26" viewBox="0 0 26 26"><rect x="0" y="0" width="26" height="26" fill="#f0efe8"/><path d="M1 6 L23 1 L25 20 L3 25 Z" fill="#fbfbf8"/><path d="M3 7 L22 3 L24 19 L5 23 Z" fill="#2f4a26"/><circle cx="15" cy="15" r="6" fill="#e04e8e"/><circle cx="15" cy="15" r="2.5" fill="#f59ac0"/><path d="M4 8 L12 6 L9 14 Z" fill="#6b8a4a"/></svg>
<div class="abs" style="left:891px;top:568.9px;font-size:10.7px;line-height:13px;color:#605f62;white-space:nowrap">图层 <span style="font-size:10.3px;letter-spacing:-0.45px">95</span></div>
<svg class="abs" style="left:1021px;top:568.6px" width="17" height="13" viewBox="0 0 17 13"><path d="M2.5 6.5 C5 3 12 3 14.5 6.5 C12 10 5 10 2.5 6.5 Z" fill="none" stroke="#d4d4d4" stroke-width="1.6"/><circle cx="8.5" cy="6.5" r="2" fill="none" stroke="#d4d4d4" stroke-width="1.5"/><path d="M3.5 1.5 L13.8 11.8" stroke="#2e2d30" stroke-width="2.8"/><path d="M3.5 1.5 L13.8 11.8" stroke="#d4d4d4" stroke-width="1.4"/></svg>
<div class="abs" style="left:858.5px;top:596.9px;width:25.5px;height:25px;background-color:#ffffff;background-image:linear-gradient(45deg,#ebebeb 25%,transparent 25%,transparent 75%,#ebebeb 75%),linear-gradient(45deg,#ebebeb 25%,transparent 25%,transparent 75%,#ebebeb 75%);background-size:6px 6px;background-position:0 0,3px 3px;border-radius:1px"></div>
<svg class="abs" style="left:858.5px;top:596.9px" width="26" height="26" viewBox="0 0 26 26"><path d="M2 7 C7 12 16 13 24 8 C20 16 12 19 6 15 C4 13 2 10 2 7 Z" fill="#b0342b"/></svg>
<div class="abs" style="left:891px;top:603.7px;font-size:10.7px;line-height:13px;color:#dedede;white-space:nowrap">图层 <span style="font-size:10.3px;letter-spacing:-0.45px">121</span></div>
<svg class="abs" style="left:1021px;top:603.4px" width="17" height="13" viewBox="0 0 17 13"><path d="M3 6.5 C5 3 12 3 14 6.5 C12 10 5 10 3 6.5 Z" fill="none" stroke="#505052" stroke-width="1.3"/><circle cx="8.5" cy="6.5" r="1.8" fill="none" stroke="#505052" stroke-width="1.2"/></svg>
<div class="abs" style="left:858.5px;top:631.7px;width:25.5px;height:25px;background-color:#ffffff;background-image:linear-gradient(45deg,#ebebeb 25%,transparent 25%,transparent 75%,#ebebeb 75%),linear-gradient(45deg,#ebebeb 25%,transparent 25%,transparent 75%,#ebebeb 75%);background-size:6px 6px;background-position:0 0,3px 3px;border-radius:1px"></div>
<svg class="abs" style="left:858.5px;top:631.7px" width="26" height="26" viewBox="0 0 26 26"><path d="M1 11 C4 6 10 7 13 9 C17 7 23 9 25 13 C24 17 20 17 18 19 C14 21 11 18 8 19 C4 19 1 16 1 11 Z" fill="#e05a4c"/></svg>
<div class="abs" style="left:891px;top:638.5px;font-size:10.7px;line-height:13px;color:#dedede;white-space:nowrap">图层 <span style="font-size:10.3px;letter-spacing:-0.45px">123</span></div>
<svg class="abs" style="left:1021px;top:638.2px" width="17" height="13" viewBox="0 0 17 13"><path d="M3 6.5 C5 3 12 3 14 6.5 C12 10 5 10 3 6.5 Z" fill="none" stroke="#505052" stroke-width="1.3"/><circle cx="8.5" cy="6.5" r="1.8" fill="none" stroke="#505052" stroke-width="1.2"/></svg>
<div class="abs" style="left:858.5px;top:666.5px;width:25.5px;height:25px;background-color:#ffffff;background-image:linear-gradient(45deg,#ebebeb 25%,transparent 25%,transparent 75%,#ebebeb 75%),linear-gradient(45deg,#ebebeb 25%,transparent 25%,transparent 75%,#ebebeb 75%);background-size:6px 6px;background-position:0 0,3px 3px;border-radius:1px"></div>
<svg class="abs" style="left:858.5px;top:666.5px" width="26" height="26" viewBox="0 0 26 26"><path d="M3 8 C6 3 16 2 21 5 C25 9 24 17 20 21 C15 24 7 23 4 18 C2 14 2 11 3 8 Z" fill="#f2bf3a"/></svg>
<div class="abs" style="left:891px;top:673.3px;font-size:10.7px;line-height:13px;color:#dedede;white-space:nowrap">图层 <span style="font-size:10.3px;letter-spacing:-0.45px">122</span></div>
<svg class="abs" style="left:1021px;top:673.0px" width="17" height="13" viewBox="0 0 17 13"><path d="M3 6.5 C5 3 12 3 14 6.5 C12 10 5 10 3 6.5 Z" fill="none" stroke="#505052" stroke-width="1.3"/><circle cx="8.5" cy="6.5" r="1.8" fill="none" stroke="#505052" stroke-width="1.2"/></svg>
<div class="abs" style="left:858.5px;top:701.3px;width:25.5px;height:25px;background-color:#ffffff;background-image:linear-gradient(45deg,#ebebeb 25%,transparent 25%,transparent 75%,#ebebeb 75%),linear-gradient(45deg,#ebebeb 25%,transparent 25%,transparent 75%,#ebebeb 75%);background-size:6px 6px;background-position:0 0,3px 3px;border-radius:1px"></div>
<svg class="abs" style="left:858.5px;top:701.3px" width="26" height="26" viewBox="0 0 26 26"><ellipse cx="13" cy="13" rx="11" ry="7" fill="#e05b4d"/></svg>
<div class="abs" style="left:891px;top:708.1px;font-size:10.7px;line-height:13px;color:#dedede;white-space:nowrap">图层 <span style="font-size:10.3px;letter-spacing:-0.45px">120</span></div>
<svg class="abs" style="left:1021px;top:707.8px" width="17" height="13" viewBox="0 0 17 13"><path d="M3 6.5 C5 3 12 3 14 6.5 C12 10 5 10 3 6.5 Z" fill="none" stroke="#505052" stroke-width="1.3"/><circle cx="8.5" cy="6.5" r="1.8" fill="none" stroke="#505052" stroke-width="1.2"/></svg>
<div class="abs" style="left:858.5px;top:736.1px;width:25.5px;height:25px;background-color:#ffffff;background-image:linear-gradient(45deg,#ebebeb 25%,transparent 25%,transparent 75%,#ebebeb 75%),linear-gradient(45deg,#ebebeb 25%,transparent 25%,transparent 75%,#ebebeb 75%);background-size:6px 6px;background-position:0 0,3px 3px;border-radius:1px"></div>
<svg class="abs" style="left:858.5px;top:736.1px" width="26" height="26" viewBox="0 0 26 26"><path d="M2 15 C6 8 20 8 24 15 C18 13 8 13 2 15 Z" fill="#e05b4d"/><path d="M2 15 C8 17 18 17 24 15 C18 14 8 14 2 15 Z" fill="#e05b4d"/></svg>
<div class="abs" style="left:891px;top:742.9px;font-size:10.7px;line-height:13px;color:#dedede;white-space:nowrap">图层 <span style="font-size:10.3px;letter-spacing:-0.45px">133</span></div>
<svg class="abs" style="left:1021px;top:742.6px" width="17" height="13" viewBox="0 0 17 13"><path d="M3 6.5 C5 3 12 3 14 6.5 C12 10 5 10 3 6.5 Z" fill="none" stroke="#505052" stroke-width="1.3"/><circle cx="8.5" cy="6.5" r="1.8" fill="none" stroke="#505052" stroke-width="1.2"/></svg>
<div class="abs" style="left:858.5px;top:770.9px;width:25.5px;height:25px;background-color:#ffffff;background-image:linear-gradient(45deg,#ebebeb 25%,transparent 25%,transparent 75%,#ebebeb 75%),linear-gradient(45deg,#ebebeb 25%,transparent 25%,transparent 75%,#ebebeb 75%);background-size:6px 6px;background-position:0 0,3px 3px;border-radius:1px"></div>
<svg class="abs" style="left:858.5px;top:770.9px" width="26" height="26" viewBox="0 0 26 26"><path d="M2 8 C8 16 18 16 24 10 C20 20 8 20 2 8 Z" fill="#c7443a"/></svg>
<div class="abs" style="left:891px;top:777.7px;font-size:10.7px;line-height:13px;color:#dedede;white-space:nowrap">图层 <span style="font-size:10.3px;letter-spacing:-0.45px">132</span></div>
<svg class="abs" style="left:1021px;top:777.4px" width="17" height="13" viewBox="0 0 17 13"><path d="M3 6.5 C5 3 12 3 14 6.5 C12 10 5 10 3 6.5 Z" fill="none" stroke="#505052" stroke-width="1.3"/><circle cx="8.5" cy="6.5" r="1.8" fill="none" stroke="#505052" stroke-width="1.2"/></svg>
<div class="abs" style="left:858.5px;top:805.7px;width:25.5px;height:25px;background-color:#ffffff;background-image:linear-gradient(45deg,#ebebeb 25%,transparent 25%,transparent 75%,#ebebeb 75%),linear-gradient(45deg,#ebebeb 25%,transparent 25%,transparent 75%,#ebebeb 75%);background-size:6px 6px;background-position:0 0,3px 3px;border-radius:1px"></div>
<svg class="abs" style="left:1021px;top:812.2px" width="17" height="13" viewBox="0 0 17 13"><path d="M3 6.5 C5 3 12 3 14 6.5 C12 10 5 10 3 6.5 Z" fill="none" stroke="#505052" stroke-width="1.3"/><circle cx="8.5" cy="6.5" r="1.8" fill="none" stroke="#505052" stroke-width="1.2"/></svg>
<div id="rsep" class="abs"></div>
<div id="rstrip" class="abs">
  <svg class="abs" style="left:0;top:0" width="38" height="500" viewBox="1042 38 38 500">
    <!-- layers icon -->
    <path d="M1061 50.5 L1069 56 L1061 61.5 L1053 56 Z" fill="#d4d4d4"/>
    <path d="M1055.2 59.2 L1061 63.2 L1066.8 59.2 L1069 60.7 L1061 66 L1053 60.7 Z" fill="#d4d4d4"/>
    <!-- selected button -->
    <rect x="1045" y="80" width="31" height="32" rx="4" fill="#424244"/>
    <path d="M1061 88.5 L1065 91.5 L1061 94.5 L1053.5 94.5 Z" fill="#d8d8d8"/>
    <path d="M1053.5 96 L1061 96 L1061 103 Z" fill="#d8d8d8"/>
    <path d="M1061 92 H1070 M1061 95.5 H1070 M1061 99 H1070 M1061 102.5 H1070" stroke="#d8d8d8" stroke-width="2"/>
    <!-- adjust sliders -->
    <g stroke="#d0d0d0" stroke-width="1.3" fill="none">
      <path d="M1054 128 H1068 M1054 133.5 H1068 M1054 139 H1068"/>
    </g>
    <g fill="#2c2c2e" stroke="#d0d0d0" stroke-width="1.3">
      <circle cx="1058" cy="128" r="2.2"/><circle cx="1064" cy="133.5" r="2.2"/><circle cx="1059" cy="139" r="2.2"/>
    </g>
    <!-- add layer -->
    <rect x="1054" y="322" width="13.5" height="13" fill="none" stroke="#d0d0d0" stroke-width="1.5"/>
    <path d="M1060.7 325 V332 M1057.2 328.5 H1064.2" stroke="#d0d0d0" stroke-width="1.5"/>
    <path d="M1069 342 L1074 337 L1074 342 Z" fill="#cfcfcf"/>
    <!-- blue hidden eye -->
    <path d="M1051.5 367 C1055 361.5 1065 361.5 1068.5 367 C1065 372.5 1055 372.5 1051.5 367 Z" fill="none" stroke="#4a78d8" stroke-width="1.6"/>
    <circle cx="1060" cy="367" r="2.5" fill="none" stroke="#4a78d8" stroke-width="1.5"/>
    <path d="M1053 360.5 L1067 374" stroke="#2c2c2e" stroke-width="3"/>
    <path d="M1053 360.5 L1067 374" stroke="#4a78d8" stroke-width="1.5"/>
    <!-- mask -->
    <rect x="1053" y="398" width="16" height="13" fill="#d4d4d4"/>
    <circle cx="1061" cy="404.5" r="4" fill="#2c2c2e"/>
    <!-- merge -->
    <path d="M1057 440 V436 H1068 V449 H1063" fill="none" stroke="#d0d0d0" stroke-width="1.5"/>
    <path d="M1058.5 440 V447" stroke="#d0d0d0" stroke-width="1.5"/>
    <path d="M1055 444.5 L1058.5 449 L1062 444.5" fill="none" stroke="#d0d0d0" stroke-width="1.5"/>
    <!-- eraser lightning -->
    <path d="M1053.5 481 L1061 475 L1069 482 L1061 488 Z" fill="none" stroke="#d0d0d0" stroke-width="1.4"/>
    <path d="M1068 473 L1062 478 L1065 479 L1061 484 L1068 479 L1065 478 Z" fill="#d0d0d0"/>
    <!-- dots -->
    <circle cx="1056" cy="518" r="1.6" fill="#d0d0d0"/><circle cx="1061" cy="518" r="1.6" fill="#d0d0d0"/><circle cx="1066" cy="518" r="1.6" fill="#d0d0d0"/>
  </svg>
</div>
<!-- scroll handle -->
<svg class="abs" style="left:818px;top:664px" width="21" height="48" viewBox="818 664 21 48">
  <circle cx="845" cy="687.4" r="20" fill="#5e5e60" stroke="#e0e0e0" stroke-width="1"/>
</svg>
<!-- home indicator -->
<div class="abs" style="left:404px;top:799.5px;width:272px;height:4.5px;background:#0a0a0a;border-radius:2.5px"></div>
<!-- watermark -->
<div class="abs" style="left:802px;top:753.5px;font-size:27px;line-height:36px;color:#ffffff;white-space:nowrap;text-shadow:1px 1px 1px #000,-1px 0 1px #000,0 -1px 1px #000,0 0 3px #000"><b>头条</b> @历史有趣科普</div>

</body></html>
